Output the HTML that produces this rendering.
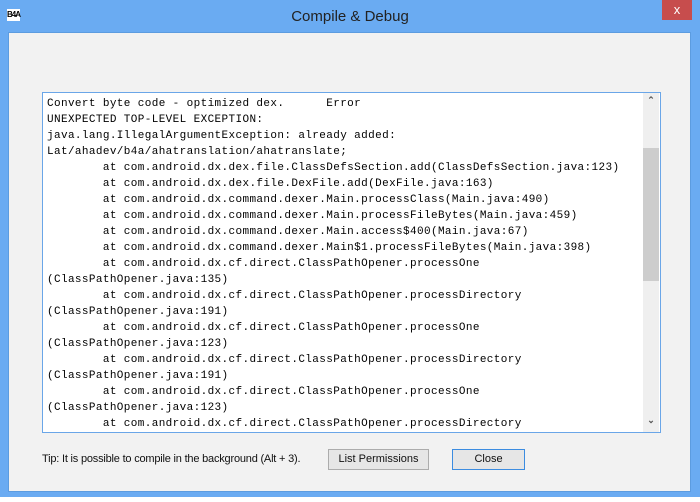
<!DOCTYPE html><html><head><style>
body{margin:0;width:700px;height:502px;background:#fff;position:relative;overflow:hidden;font-family:"Liberation Sans",sans-serif}
.frame{position:absolute;left:0;top:0;width:700px;height:497px;background:#6aabf2}
.client{position:absolute;left:8px;top:32px;width:683px;height:460px;background:#f2f2f2;border:1px solid #5c9ce0;box-sizing:border-box}
.title{position:absolute;left:0;width:700px;top:8px;text-align:center;font-size:15px;color:#222}
.logo{position:absolute;left:7px;top:9px;width:13px;height:12px;background:#fff;font-size:8px;font-weight:bold;line-height:12px;text-align:center;letter-spacing:-1px}
.x{position:absolute;left:662px;top:0;width:30px;height:20px;background:#c74d4d;color:#fff;text-align:center;font-size:13px;line-height:20px}
.box{position:absolute;left:42px;top:92px;width:619px;height:341px;background:#fff;border:1px solid #6aa6e8;box-sizing:border-box;overflow:hidden}
pre{margin:0;position:absolute;left:4px;top:3px;font-family:"Liberation Mono",monospace;font-size:11px;letter-spacing:0.38px;line-height:16px;color:#000}
.sb{position:absolute;left:600px;top:0;width:16px;height:339px;background:#efefef}
.th{position:absolute;left:600px;top:55px;width:16px;height:133px;background:#cdcdcd}
.ar{position:absolute;left:600px;width:16px;text-align:center;font-size:9px;color:#555}
.tip{position:absolute;left:42px;top:453px;font-size:11px;color:#111;letter-spacing:-0.2px}
.btn{position:absolute;top:449px;height:21px;background:#e6e6e6;border:1px solid #acacac;box-sizing:border-box;font-size:11px;text-align:center;line-height:19px;color:#111}
</style></head><body>
<div class="frame"></div>
<div class="logo">B4A</div>
<div class="title">Compile &amp; Debug</div>
<div class="x">x</div>
<div class="client"></div>
<div class="box"><pre>Convert byte code - optimized dex.      Error
UNEXPECTED TOP-LEVEL EXCEPTION:
java.lang.IllegalArgumentException: already added:
Lat/ahadev/b4a/ahatranslation/ahatranslate;
        at com.android.dx.dex.file.ClassDefsSection.add(ClassDefsSection.java:123)
        at com.android.dx.dex.file.DexFile.add(DexFile.java:163)
        at com.android.dx.command.dexer.Main.processClass(Main.java:490)
        at com.android.dx.command.dexer.Main.processFileBytes(Main.java:459)
        at com.android.dx.command.dexer.Main.access$400(Main.java:67)
        at com.android.dx.command.dexer.Main$1.processFileBytes(Main.java:398)
        at com.android.dx.cf.direct.ClassPathOpener.processOne
(ClassPathOpener.java:135)
        at com.android.dx.cf.direct.ClassPathOpener.processDirectory
(ClassPathOpener.java:191)
        at com.android.dx.cf.direct.ClassPathOpener.processOne
(ClassPathOpener.java:123)
        at com.android.dx.cf.direct.ClassPathOpener.processDirectory
(ClassPathOpener.java:191)
        at com.android.dx.cf.direct.ClassPathOpener.processOne
(ClassPathOpener.java:123)
        at com.android.dx.cf.direct.ClassPathOpener.processDirectory</pre>
<div class="sb"></div><div class="th"></div>
<div class="ar" style="top:2px;font-weight:bold">&#8963;</div><div class="ar" style="top:322px;font-weight:bold">&#8964;</div>
</div>
<div class="tip">Tip: It is possible to compile in the background (Alt + 3).</div>
<div class="btn" style="left:328px;width:101px">List Permissions</div>
<div class="btn" style="left:452px;width:73px;border-color:#3c8ce0">Close</div>
</body></html>
